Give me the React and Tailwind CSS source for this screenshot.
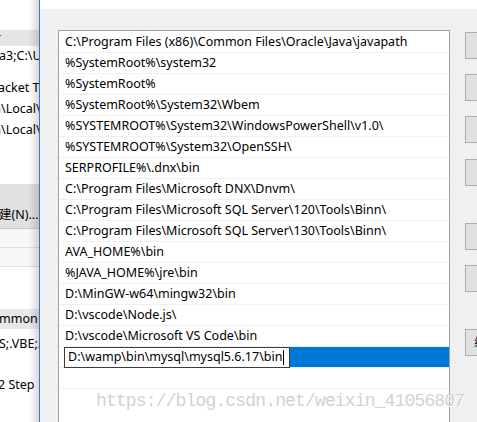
import React from "react";

const paths = [
  "C:\\Program Files (x86)\\Common Files\\Oracle\\Java\\javapath",
  "%SystemRoot%\\system32",
  "%SystemRoot%",
  "%SystemRoot%\\System32\\Wbem",
  "%SYSTEMROOT%\\System32\\WindowsPowerShell\\v1.0\\",
  "%SYSTEMROOT%\\System32\\OpenSSH\\",
  "SERPROFILE%\\.dnx\\bin",
  "C:\\Program Files\\Microsoft DNX\\Dnvm\\",
  "C:\\Program Files\\Microsoft SQL Server\\120\\Tools\\Binn\\",
  "C:\\Program Files\\Microsoft SQL Server\\130\\Tools\\Binn\\",
  "AVA_HOME%\\bin",
  "%JAVA_HOME%\\jre\\bin",
  "D:\\MinGW-w64\\mingw32\\bin",
  "D:\\vscode\\Node.js\\",
  "D:\\vscode\\Microsoft VS Code\\bin",
];

const buttons = [
  { label: "新建(N)", mt: "mt-[2px]" },
  { label: "编辑(E)", mt: "mt-[15px]" },
  { label: "浏览(B)...", mt: "mt-[15px]" },
  { label: "删除(D)", mt: "mt-[16px]" },
  { label: "上移(U)", mt: "mt-[37px]" },
  { label: "下移(O)", mt: "mt-[15px]" },
  { label: "编辑文本(T)...", mt: "mt-[37px]" },
];

// the window behind the dialog, only a sliver of it shows
const BackWindow = () => (
  <div className="relative w-[39px] shrink-0 overflow-hidden bg-white text-[12.5px] text-black leading-none">
    <div className="h-[30px]" />
    <div className="h-[16px] bg-[#e5e5e5] flex items-center">
      <span className="-ml-[4px] text-[#0066cc]">r</span>
    </div>
    <div className="h-[4px]" />
    <div className="h-[12px] whitespace-nowrap -ml-[1px]">a3;C:\Users</div>
    <div className="h-[16px]" />
    <div className="h-[21px] flex items-center whitespace-nowrap -ml-[2px]">acket Tracer</div>
    <div className="h-[21px] flex items-center whitespace-nowrap -ml-[6px]">a\Local\Temp</div>
    <div className="h-[21px] flex items-center whitespace-nowrap -ml-[6px]">a\Local\Temp</div>
    <div className="h-[43px]" />
    <div className="h-[45px] bg-[#e1e1e1] border-b border-[#c8c8c8] flex items-end pb-[7px] whitespace-nowrap">
      <span className="-ml-[1px]">建(N)...</span>
    </div>
    <div className="h-[19px] bg-[#f7f7f7] border-b border-[#dedede]" />
    <div className="h-[19px] bg-[#f7f7f7] border-b border-[#dedede]" />
    <div className="h-[42px]" />
    <div className="h-[20px] bg-[#e8e8e8] flex items-center whitespace-nowrap">
      <span className="-ml-[1px]">mmon Files</span>
    </div>
    <div className="h-[8px]" />
    <div className="h-[14px] flex items-center whitespace-nowrap -ml-[1px]">S;.VBE;.JS</div>
    <div className="h-[27px]" />
    <div className="h-[14px] flex items-center whitespace-nowrap -ml-[2px]">2 Step</div>
    <div className="absolute inset-y-0 right-0 w-[10px] bg-gradient-to-r from-transparent to-black/15" />
  </div>
);

const Row = ({ text }) => (
  <div className="h-[21px] border-b border-[#f0f0f0] flex items-center pl-[6px] whitespace-nowrap">
    {text}
  </div>
);

export default function App() {
  return (
    <div
      className="relative w-[477px] h-[422px] overflow-hidden flex bg-white text-black"
      style={{ fontFamily: '"Noto Sans", "Noto Sans CJK SC", sans-serif' }}
    >
      <BackWindow />
      <div className="w-px shrink-0 bg-[#2a7bd1]" />

      {/* edit environment variable dialog */}
      <div className="flex-1 min-h-0 flex flex-col bg-[#f0f0f0] overflow-hidden">
        <div className="h-[9px] shrink-0 bg-white" />
        <div className="flex pl-[18px] pt-[21px] flex-1 min-h-0 items-start">
          <div className="w-[392px] shrink-0 bg-white border border-b-0 border-[#a0a0a0] pt-px text-[12.5px] leading-none">
            {paths.map((p, i) => (
              <Row key={i} text={p} />
            ))}
            <div className="h-[21px] border-b border-[#f0f0f0] flex items-stretch">
              <div className="w-[5px] bg-white" />
              <div className="w-[226px] h-[21px] border border-[#3c3c3c] bg-white flex items-center pl-[3px] whitespace-nowrap">
                D:\wamp\bin\mysql\mysql5.6.17\bin
                <span className="ml-px w-px h-[15px] bg-black" />
              </div>
              <div className="flex-1 bg-[#0078d7]" />
            </div>
            <div className="h-[21px] border-b border-[#f0f0f0]" />
            <div className="h-[40px]" />
          </div>

          <div className="ml-[15px] flex flex-col shrink-0 text-[12px]">
            {buttons.map((b) => (
              <div
                key={b.label}
                className={`${b.mt} w-[90px] h-[27px] shrink-0 border border-[#adadad] bg-[#e1e1e1] flex items-center justify-center whitespace-nowrap`}
              >
                {b.label}
              </div>
            ))}
          </div>
        </div>
      </div>

      {/* csdn watermark */}
      <div
        className="absolute left-[96px] top-[388px] text-[18px] tracking-[-0.85px] text-[#d2d2d2] whitespace-nowrap pointer-events-none"
        style={{ fontFamily: '"Liberation Mono", monospace', textShadow: "1px 1px 0 #ffffff" }}
      >
        https://blog.csdn.net/weixin_41056807
      </div>
    </div>
  );
}
